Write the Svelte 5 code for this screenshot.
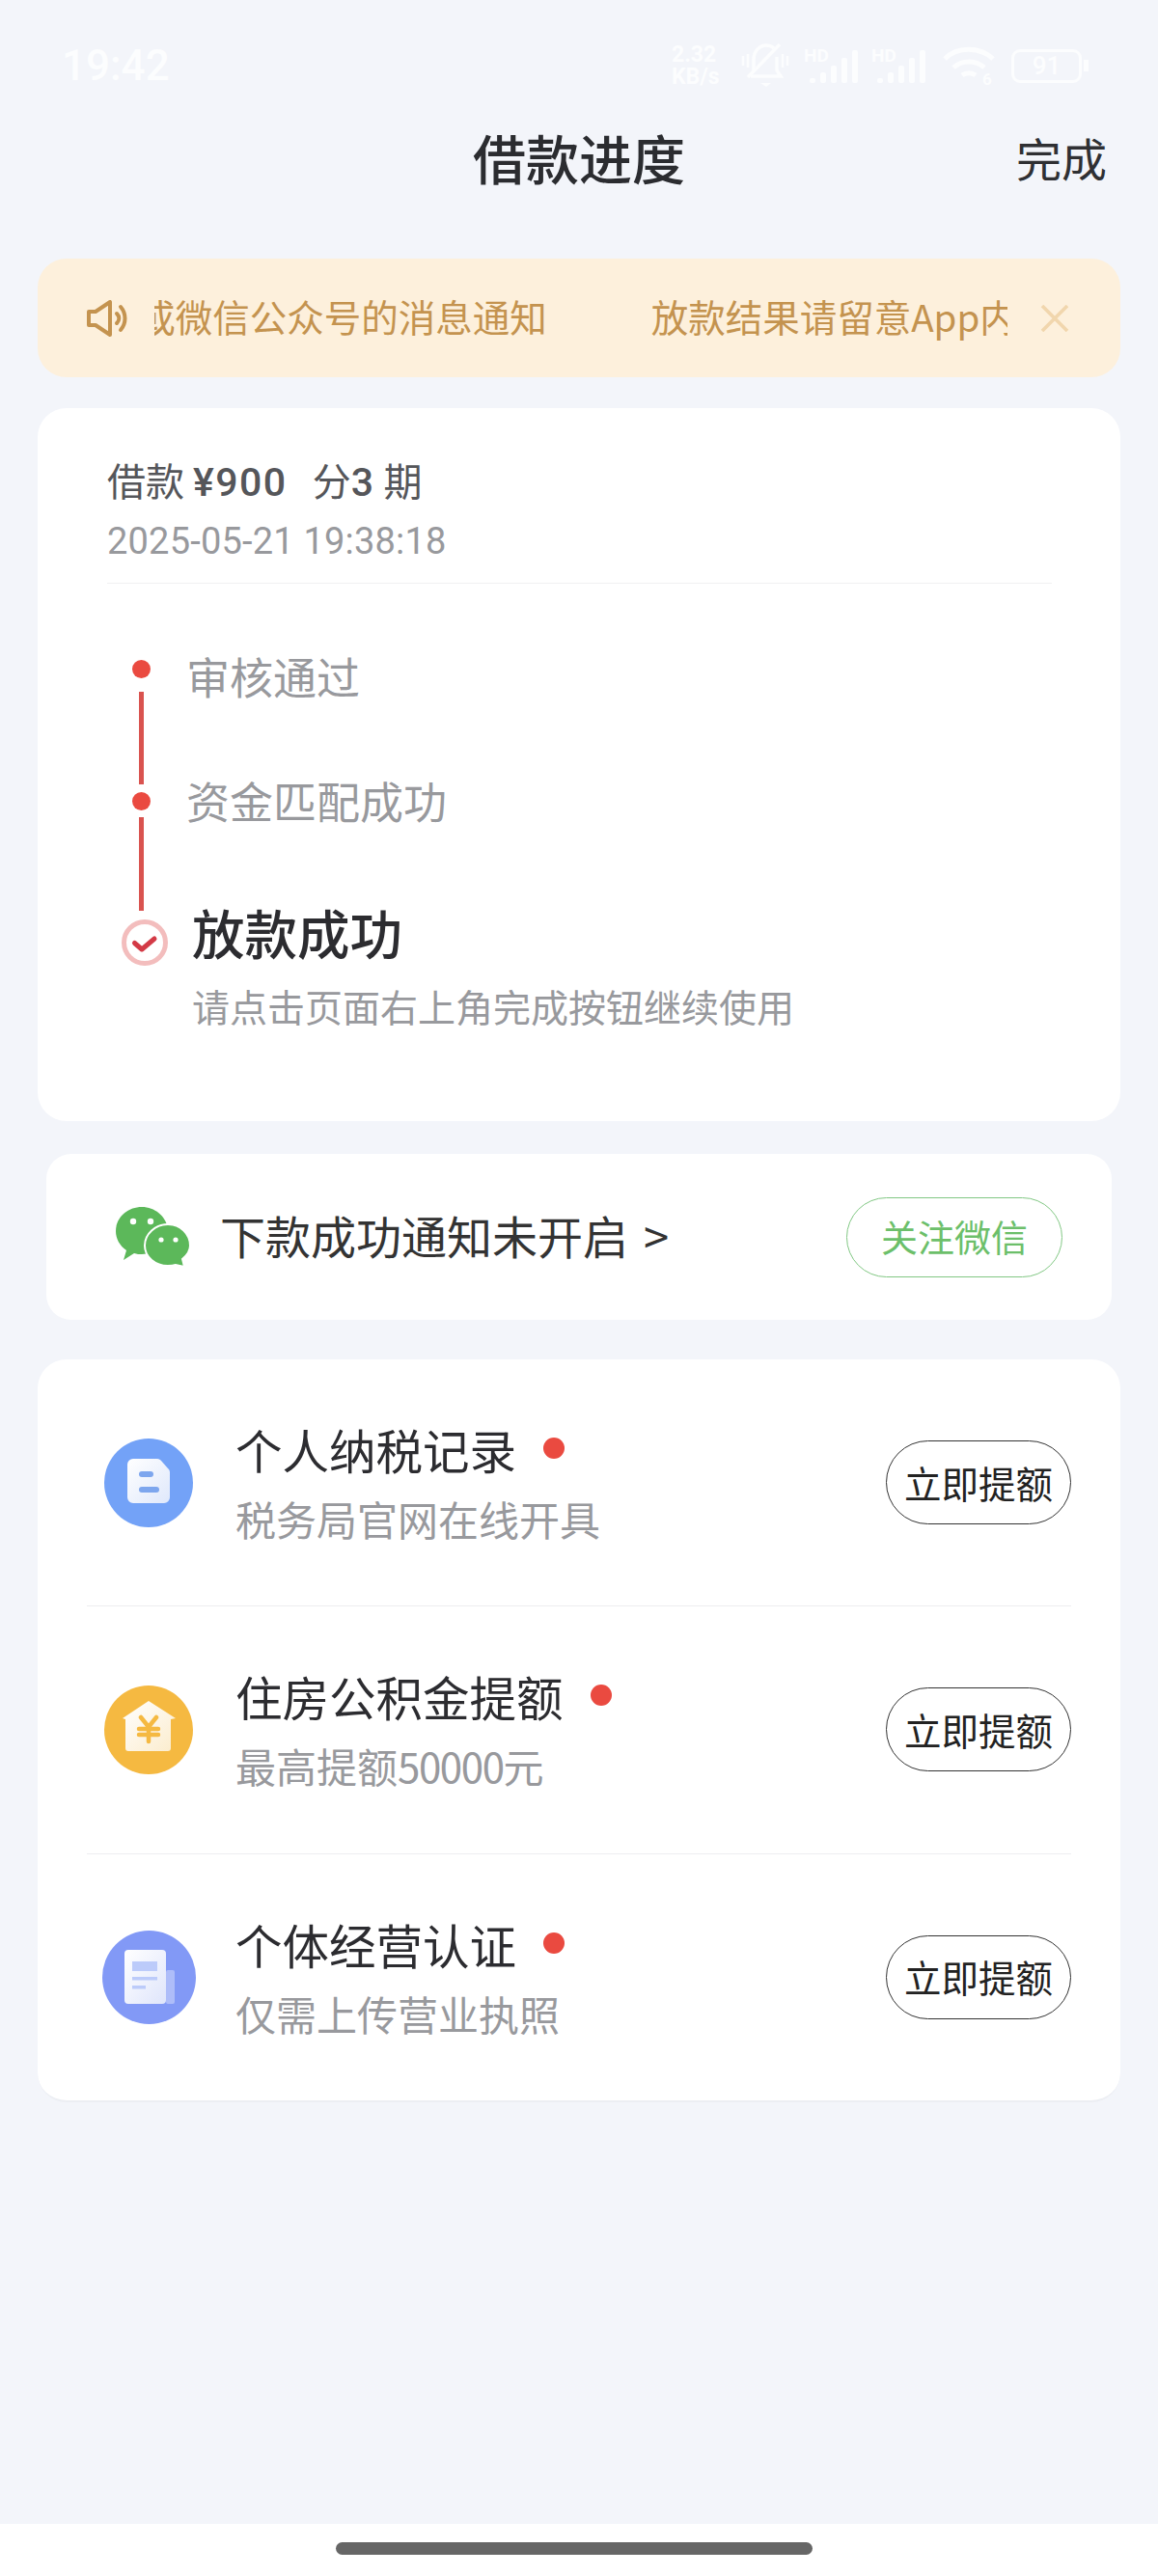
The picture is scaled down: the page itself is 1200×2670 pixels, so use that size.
<script>
  const steps = [
    { label: '审核通过' },
    { label: '资金匹配成功' }
  ];

  const offers = [
    { key: 'tax', title: '个人纳税记录', desc: '税务局官网在线开具' },
    { key: 'fund', title: '住房公积金提额', desc: '最高提额', num: '50000', unit: '元' },
    { key: 'biz', title: '个体经营认证', desc: '仅需上传营业执照' }
  ];
</script>

<div class="page">
  <header class="status-bar">
    <span class="time">19:42</span>
    <div class="status-icons">
      <span class="speed">2.32<br />KB/s</span>
      <svg class="bell" viewBox="0 0 50 46" fill="none" stroke="currentColor" stroke-width="3.5">
        <path d="M13 28V17C13 8 19 2 26 2c3 0 6 1 8 3M37 14v14l4 6H10" />
        <path d="M40 1 7 35" />
        <path d="M2 13v10M7 11v14M43 11v14M48 13v10" stroke-width="2.5" />
        <path d="M20 41h11l-5 4z" fill="currentColor" stroke="none" />
      </svg>
      <svg class="signal" viewBox="0 0 60 38" fill="currentColor">
        <text x="0" y="15" class="hd">HD</text>
        <rect x="6" y="32" width="6" height="5" rx="2" />
        <rect x="17" y="26" width="6" height="11" rx="2" />
        <rect x="28" y="19" width="6" height="18" rx="2" />
        <rect x="39" y="11" width="6" height="26" rx="2" />
        <rect x="50" y="3" width="6" height="34" rx="2" />
      </svg>
      <svg class="signal" viewBox="0 0 60 38" fill="currentColor">
        <text x="0" y="15" class="hd">HD</text>
        <rect x="6" y="32" width="6" height="5" rx="2" />
        <rect x="17" y="26" width="6" height="11" rx="2" />
        <rect x="28" y="19" width="6" height="18" rx="2" />
        <rect x="39" y="11" width="6" height="26" rx="2" />
        <rect x="50" y="3" width="6" height="34" rx="2" />
      </svg>
      <svg class="wifi" viewBox="0 0 54 42" fill="none" stroke="currentColor" stroke-width="5">
        <path d="M2 14C15 1 38 1 52 14" />
        <path d="M11 23c9-8 23-8 32 0" />
        <path d="M20 31c4-3 10-3 14 0" />
        <text x="41" y="41" class="wifi-num">6</text>
      </svg>
      <div class="battery">
        <span class="battery-body">91</span>
        <span class="battery-knob"></span>
      </div>
    </div>
  </header>

  <nav class="nav">
    <h1>借款进度</h1>
    <span class="done">完成</span>
  </nav>

  <div class="notice">
    <svg class="speaker" viewBox="0 0 42 38" fill="none" stroke="currentColor" stroke-width="4" stroke-linejoin="round">
      <path d="M2 12h7L24 2v34L9 26H2z" />
      <path d="M31 14c3 3 3 7 0 10M35 7c6 7 6 17 0 24" stroke-linecap="round" />
    </svg>
    <div class="marquee">
      <div class="track">
        <span>放款结果请留意App内或微信公众号的消息通知</span>
        <span>放款结果请留意App内或微信公众号的消息通知</span>
      </div>
    </div>
    <svg class="close" viewBox="0 0 30 28" fill="none" stroke="currentColor" stroke-width="3.6">
      <path d="M2 1l26 26M28 1 2 27" />
    </svg>
  </div>

  <section class="card progress">
    <div class="loan">
      <div class="loan-amount">借款 <b>¥900</b><span class="loan-split">分</span><b>3</b> 期</div>
      <div class="loan-time">2025-05-21 19:38:18</div>
    </div>

    <div class="timeline">
      {#each steps as step, i (step.label)}
        <div class="step" class:step-second={i === 1}>
          <div class="rail">
            <span class="dot"></span>
            <span class="line"></span>
          </div>
          <span class="step-label">{step.label}</span>
        </div>
      {/each}
      <div class="step step-last">
        <svg class="ring" viewBox="0 0 48 48" fill="none">
          <circle cx="24" cy="24" r="21.5" stroke="#f3bdbd" stroke-width="5" />
          <path d="M13.5 24.5l7.5 6.5 13-11" stroke="#d33a46" stroke-width="5" stroke-linecap="round" stroke-linejoin="round" />
        </svg>
        <div class="step-body">
          <div class="step-title">放款成功</div>
          <div class="step-hint">请点击页面右上角完成按钮继续使用</div>
        </div>
      </div>
    </div>
  </section>

  <section class="wechat">
    <svg class="wechat-icon" viewBox="0 0 78 62">
      <path d="M27 0C12 0 0 11 0 25c0 8 4 15 11 20l-3 10 11-7c3 1 5 1 8 1 15 0 27-11 27-24S42 0 27 0z" fill="#5cb85a" />
      <path d="M54 18c-13 0-24 10-24 22s11 21 24 21c3 0 5 0 8-1l9 2-2-8c5-4 8-9 8-14 0-12-10-22-23-22z" fill="#5cb85a" stroke="#fff" stroke-width="2" />
      <circle cx="18" cy="15" r="3.2" fill="#fff" />
      <circle cx="36" cy="15" r="3.2" fill="#fff" />
      <circle cx="47" cy="34" r="2.6" fill="#fff" />
      <circle cx="62" cy="34" r="2.6" fill="#fff" />
    </svg>
    <span class="wechat-text">下款成功通知未开启<span class="wechat-arrow">&gt;</span></span>
    <button class="follow">关注微信</button>
  </section>

  <section class="card offers">
    {#each offers as offer (offer.key)}
      <div class="offer">
        <div class="offer-icon">
          {#if offer.key === 'tax'}
            <svg width="92" height="92" viewBox="0 0 92 92">
              <defs>
                <linearGradient id="paperBlue" x1="0" y1="0" x2="1" y2="1">
                  <stop offset="0" stop-color="#fff" />
                  <stop offset="1" stop-color="#dfe8fb" />
                </linearGradient>
              </defs>
              <circle cx="46" cy="46" r="46" fill="#73a2f7" />
              <path d="M30 21h25c2 0 3 1 4 2l7 8c2 2 2 3 2 5v25a6 6 0 0 1-6 6H30a6 6 0 0 1-6-6V27a6 6 0 0 1 6-6z" fill="url(#paperBlue)" />
              <rect x="36" y="34" width="15" height="6" rx="3" fill="#7da6ee" />
              <rect x="36" y="50" width="21" height="6" rx="3" fill="#7da6ee" />
            </svg>
          {:else if offer.key === 'fund'}
            <svg width="92" height="92" viewBox="0 0 92 92">
              <defs>
                <linearGradient id="paperYellow" x1="0" y1="0" x2="1" y2="1">
                  <stop offset="0" stop-color="#fff" />
                  <stop offset="1" stop-color="#fbeccd" />
                </linearGradient>
              </defs>
              <circle cx="46" cy="46" r="46" fill="#f5b941" />
              <path d="M46 16l28 18-5 1v30a3 3 0 0 1-3 3H25a3 3 0 0 1-3-3V35l-3-1z" fill="url(#paperYellow)" />
              <path d="M38 33l8 10 8-10M36 45h20M36 51h20M46 43v15" fill="none" stroke="#f5b941" stroke-width="4.5" stroke-linecap="round" />
            </svg>
          {:else}
            <svg width="97" height="97" viewBox="0 0 97 97">
              <defs>
                <linearGradient id="paperIndigo" x1="0" y1="0" x2="1" y2="1">
                  <stop offset="0" stop-color="#fff" />
                  <stop offset="1" stop-color="#dfe5fb" />
                </linearGradient>
              </defs>
              <circle cx="48.5" cy="48.5" r="48.5" fill="#8299f6" />
              <rect x="66" y="41" width="9" height="35" rx="2" fill="#aebdf9" />
              <rect x="23" y="20" width="43" height="56" rx="4" fill="url(#paperIndigo)" />
              <rect x="31" y="32" width="26" height="10" fill="#bccbfa" />
              <rect x="31" y="48" width="26" height="3.5" fill="#bccbfa" />
              <rect x="31" y="57" width="14" height="3.5" fill="#bccbfa" />
            </svg>
          {/if}
        </div>
        <div class="offer-text">
          <div class="offer-title">{offer.title}<span class="red-dot"></span></div>
          <div class="offer-desc">
            {offer.desc}{#if offer.num}<span class="offer-num">{offer.num}</span>{offer.unit}{/if}
          </div>
        </div>
        <button class="raise">立即提额</button>
      </div>
    {/each}
  </section>

  <div class="spacer"></div>

  <footer class="home-bar">
    <span class="home-handle"></span>
  </footer>
</div>

<style>
  :global(body) {
    margin: 0;
    background: #f3f5fa;
  }

  .page {
    height: 2670px;
    display: flex;
    flex-direction: column;
    background: #f3f5fa;
    font-family: "Noto Sans CJK SC", "Noto Sans", sans-serif;
    color: #333;
    overflow: hidden;
  }

  .status-bar {
    height: 50px;
    padding: 43px 72px 0 64px;
    display: flex;
    justify-content: space-between;
    align-items: center;
    color: #fcfdfe;
  }

  .time {
    font-family: Roboto, sans-serif;
    font-size: 44px;
    font-weight: 500;
    line-height: 50px;
  }

  .status-icons {
    display: flex;
    align-items: center;
  }

  .speed {
    width: 72px;
    font-family: Roboto, sans-serif;
    font-size: 23px;
    font-weight: 700;
    line-height: 23px;
  }

  .bell {
    width: 50px;
    height: 46px;
    margin-right: 15px;
  }

  .signal {
    width: 60px;
    height: 38px;
    margin-right: 10px;
    overflow: visible;
  }

  .hd {
    font-family: Roboto, sans-serif;
    font-size: 19px;
    font-weight: 700;
  }

  .wifi {
    width: 54px;
    height: 42px;
    margin: 0 17px 0 4px;
    overflow: visible;
  }

  .wifi-num {
    font-family: Roboto, sans-serif;
    font-size: 17px;
    font-weight: 700;
    fill: currentColor;
    stroke: none;
  }

  .battery {
    display: flex;
    align-items: center;
    gap: 2px;
  }

  .battery-body {
    width: 67px;
    height: 29px;
    border: 3px solid currentColor;
    border-radius: 9px;
    font-family: Roboto, sans-serif;
    font-size: 26px;
    font-weight: 500;
    line-height: 29px;
    text-align: center;
  }

  .battery-knob {
    width: 5px;
    height: 12px;
    background: currentColor;
  }

  .nav {
    height: 72px;
    margin-top: 33px;
    display: flex;
    justify-content: flex-end;
    align-items: center;
    position: relative;
    padding-right: 53px;
  }

  .nav h1 {
    position: absolute;
    left: 0;
    right: 0;
    margin: 0;
    text-align: center;
    font-size: 55px;
    font-weight: 500;
    color: #2b2c30;
  }

  .done {
    font-size: 47px;
    color: #2f3033;
  }

  .notice {
    height: 123px;
    margin: 70px 39px 0;
    padding-left: 51px;
    display: flex;
    align-items: center;
    background: #fdf0dc;
    border-radius: 30px;
    color: #c4934f;
  }

  .speaker {
    width: 42px;
    height: 38px;
    flex: none;
  }

  .marquee {
    width: 884px;
    margin-left: 28px;
    overflow: hidden;
    flex: none;
  }

  .track {
    display: flex;
    gap: 108px;
    margin-left: -396px;
    padding-bottom: 5px;
    white-space: nowrap;
    font-size: 38.5px;
    line-height: 51px;
  }

  .close {
    width: 30px;
    height: 28px;
    margin-left: 34px;
    color: #f1d6ad;
    flex: none;
  }

  .card {
    margin: 0 39px;
    background: #fff;
    border-radius: 30px;
  }

  .progress {
    height: 739px;
    margin-top: 32px;
    box-sizing: border-box;
    padding: 47px 71px 0 72px;
  }

  .loan {
    padding-bottom: 18px;
    border-bottom: 1px solid #f0f0f2;
  }

  .loan-amount {
    font-size: 40px;
    line-height: 54px;
    color: #55565a;
  }

  .loan-amount b {
    font-family: Roboto, sans-serif;
    font-size: 41px;
    font-weight: 500;
    letter-spacing: 1.5px;
  }

  .loan-split {
    margin-left: 26px;
  }

  .loan-time {
    margin-top: 9px;
    font-family: Roboto, sans-serif;
    font-size: 38px;
    letter-spacing: 0.2px;
    line-height: 50px;
    color: #98999d;
  }

  .timeline {
    margin-top: 79px;
  }

  .step {
    display: flex;
    height: 137px;
  }

  .step-second {
    height: 132px;
  }

  .rail {
    width: 72px;
    flex: none;
    display: flex;
    flex-direction: column;
    align-items: flex-start;
    padding-left: 26px;
    box-sizing: border-box;
  }

  .dot {
    width: 19px;
    height: 19px;
    border-radius: 50%;
    background: #ea4a40;
    flex: none;
  }

  .line {
    width: 5px;
    flex: 1;
    margin: 14px 0 8px 7px;
    background: #d9534f;
  }

  .step-second .line {
    margin: 7px 0 9px 7px;
  }

  .step-label {
    margin-left: 10px;
    font-size: 45px;
    line-height: 44px;
    margin-top: -5px;
    color: #98999d;
  }

  .step-second .step-label {
    margin-top: -13px;
  }

  .step-last {
    height: auto;
    padding-left: 15px;
  }

  .ring {
    width: 48px;
    height: 48px;
    flex: none;
  }

  .step-body {
    margin-left: 25px;
    margin-top: -19px;
  }

  .step-title {
    font-size: 54.5px;
    font-weight: 500;
    line-height: 64px;
    color: #2c2c30;
  }

  .step-hint {
    margin-top: 20px;
    font-size: 39px;
    line-height: 48px;
    color: #98999d;
  }

  .wechat {
    height: 172px;
    margin: 34px 48px 0;
    padding: 0 51px 0 72px;
    display: flex;
    align-items: center;
    background: #fff;
    border-radius: 26px;
  }

  .wechat-icon {
    width: 78px;
    height: 62px;
    flex: none;
  }

  .wechat-text {
    margin-left: 30px;
    padding-bottom: 5px;
    font-size: 47px;
    color: #333;
  }

  .wechat-arrow {
    margin-left: 16px;
  }

  .follow {
    margin-left: auto;
    width: 224px;
    height: 83px;
    padding: 0 0 4px;
    background: #fff;
    border: 1.5px solid #82c884;
    border-radius: 42px;
    font-family: inherit;
    font-size: 38px;
    color: #6cbf6a;
  }

  .offers {
    height: 770px;
    margin-top: 41px;
    padding: 0 51px;
    box-sizing: border-box;
    display: flex;
    flex-direction: column;
    border-bottom: 2px solid #eceef3;
  }

  .offer {
    flex: 1;
    display: flex;
    align-items: center;
    border-bottom: 1px solid #eeeef0;
    padding-left: 14px;
  }

  .offer:last-child {
    border-bottom: none;
  }

  .offer-icon {
    width: 100px;
    flex: none;
    display: flex;
    justify-content: center;
  }

  .offer-icon svg {
    display: block;
  }

  .offer-text {
    margin: -2px 0 0 40px;
    flex: 1;
  }

  .offer-title {
    display: flex;
    align-items: center;
    font-size: 48.5px;
    line-height: 62px;
    color: #2c2c30;
  }

  .red-dot {
    width: 22px;
    height: 22px;
    margin: -2px 0 0 28px;
    border-radius: 50%;
    background: #ea4a40;
  }

  .offer-desc {
    margin-top: 15px;
    font-size: 42px;
    line-height: 52px;
    color: #98999d;
  }

  .offer-num {
    letter-spacing: -1.4px;
  }

  .raise {
    width: 192px;
    height: 87px;
    padding: 0 0 2px;
    background: #fff;
    border: 1.5px solid #333;
    border-radius: 44px;
    font-family: inherit;
    font-size: 38.5px;
    color: #222;
  }

  .spacer {
    flex: 1;
  }

  .home-bar {
    height: 54px;
    background: #fff;
    display: flex;
    justify-content: center;
    padding: 19px 10px 0 0;
    box-sizing: border-box;
  }

  .home-handle {
    width: 494px;
    height: 13px;
    border-radius: 7px;
    background: #666;
  }
</style>
